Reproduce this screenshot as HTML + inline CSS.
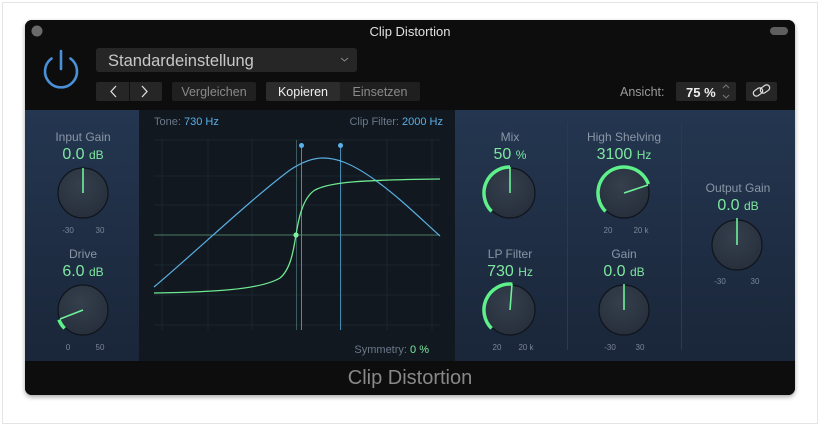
<!DOCTYPE html>
<html><head><meta charset="utf-8"><style>
html,body{margin:0;padding:0;width:820px;height:426px;overflow:hidden;background:#fff;}
svg{display:block;font-family:"Liberation Sans",sans-serif;}
</style></head><body>
<svg width="820" height="426" viewBox="0 0 820 426" xmlns="http://www.w3.org/2000/svg">
<defs>
<linearGradient id="bl" x1="0" y1="0" x2="0" y2="1"><stop offset="0" stop-color="#243650"/><stop offset="1" stop-color="#1a2639"/></linearGradient>
<radialGradient id="kn" cx="0.45" cy="0.35" r="0.7"><stop offset="0" stop-color="#353f4d"/><stop offset="1" stop-color="#262e3a"/></radialGradient>
<filter id="sh" x="-5%" y="-5%" width="110%" height="115%"><feDropShadow dx="0" dy="2" stdDeviation="2.5" flood-color="#000" flood-opacity="0.35"/></filter>
<clipPath id="win"><rect x="25" y="20" width="770" height="375" rx="7"/></clipPath>
</defs>
<rect x="2.5" y="2.5" width="815" height="421" fill="#fff" stroke="#e4e4e4"/>
<rect x="25" y="20" width="770" height="375" rx="7" fill="#0d0d0d" filter="url(#sh)"/>
<g clip-path="url(#win)">
<rect x="25" y="20" width="770" height="375" fill="#0d0d0d"/>
<rect x="25" y="110" width="114" height="251" fill="url(#bl)"/>
<rect x="139" y="110" width="316" height="251" fill="#111820"/>
<rect x="455" y="110" width="340" height="251" fill="url(#bl)"/>
<rect x="25" y="361" width="770" height="34" fill="#0d0d0d"/>
<line x1="567.5" y1="122" x2="567.5" y2="350" stroke="#2a3a50" stroke-width="1"/>
<line x1="681.5" y1="122" x2="681.5" y2="350" stroke="#2a3a50" stroke-width="1"/>
</g>
<circle cx="37" cy="31" r="5.5" fill="#6a6a6a"/>
<rect x="770" y="27" width="18" height="8" rx="4" fill="#5e5e5e"/>
<text x="410" y="36" font-size="13" fill="#e0e0e0" text-anchor="middle">Clip Distortion</text>
<path d="M51.5 58.5 A16 16 0 1 0 70.5 58.5" fill="none" stroke="#4a90d9" stroke-width="2.6" stroke-linecap="round"/>
<line x1="61" y1="51" x2="61" y2="69" stroke="#4a90d9" stroke-width="2.6" stroke-linecap="round"/>
<rect x="96" y="48" width="261" height="24" rx="3" fill="#262626"/>
<text x="108" y="66" font-size="16.5" fill="#c8c8c8">Standardeinstellung</text>
<path d="M341 58 l3.5 3 l3.5 -3" fill="none" stroke="#888" stroke-width="1"/>
<rect x="96" y="82" width="66" height="19" rx="2" fill="#262626"/>
<line x1="129.5" y1="82" x2="129.5" y2="101" stroke="#111"/>
<path d="M116 86 l-5 5.5 l5 5.5" fill="none" stroke="#ddd" stroke-width="1.3"/>
<path d="M142 86 l5 5.5 l-5 5.5" fill="none" stroke="#ddd" stroke-width="1.3"/>
<rect x="172" y="82" width="84" height="19" rx="2" fill="#202020"/>
<text x="214" y="96" font-size="12.5" fill="#8a8a8a" text-anchor="middle">Vergleichen</text>
<rect x="266" y="82" width="154" height="19" rx="2" fill="#1f1f1f"/>
<rect x="266" y="82" width="74" height="19" rx="2" fill="#2c2c2c"/>
<text x="303" y="96" font-size="12.5" fill="#f0f0f0" text-anchor="middle">Kopieren</text>
<text x="380" y="96" font-size="12.5" fill="#8a8a8a" text-anchor="middle">Einsetzen</text>
<text x="620" y="96" font-size="12.5" fill="#9a9a9a">Ansicht:</text>
<rect x="676" y="82" width="60" height="19" rx="2" fill="#262626"/>
<text x="686" y="97" font-size="13" font-weight="bold" fill="#eee">75 %</text>
<path d="M723 88 l3 -3 l3 3 M723 95 l3 3 l3 -3" fill="none" stroke="#777" stroke-width="1"/>
<rect x="746" y="82" width="31" height="19" rx="2" fill="#262626"/>
<g fill="none" stroke="#ddd" stroke-width="1.2"><rect x="753" y="89" width="10" height="6" rx="3" transform="rotate(-35 758 92)"/><rect x="760" y="86" width="10" height="6" rx="3" transform="rotate(-35 765 89)"/></g>
<g stroke="#1b2530" stroke-width="1">
<line x1="162" y1="138" x2="162" y2="330"/><line x1="208" y1="138" x2="208" y2="330"/><line x1="252" y1="138" x2="252" y2="330"/><line x1="342" y1="138" x2="342" y2="330"/><line x1="387" y1="138" x2="387" y2="330"/><line x1="432" y1="138" x2="432" y2="330"/>
<line x1="154" y1="140" x2="440" y2="140"/><line x1="154" y1="176" x2="440" y2="176"/><line x1="154" y1="205" x2="440" y2="205"/><line x1="154" y1="265" x2="440" y2="265"/><line x1="154" y1="295" x2="440" y2="295"/><line x1="154" y1="325" x2="440" y2="325"/>
</g>
<line x1="154" y1="235" x2="440" y2="235" stroke="#4a7a64" stroke-width="1"/>
<line x1="296.5" y1="140" x2="296.5" y2="330" stroke="#3c5a60" stroke-width="1"/>
<line x1="301.5" y1="146" x2="301.5" y2="330" stroke="#4a8ab0" stroke-width="1"/>
<line x1="340.5" y1="146" x2="340.5" y2="330" stroke="#4a8ab0" stroke-width="1"/>
<circle cx="301.5" cy="145.5" r="2.5" fill="#5ab0e8"/>
<circle cx="340.5" cy="145.5" r="2.5" fill="#5ab0e8"/>
<path d="M154 287 C200 248 250 200 290 170 C305 160 315 158 323 158 C335 158 350 162 375 180 C400 198 420 218 440 236" fill="none" stroke="#5aaee0" stroke-width="1.2"/>
<path d="M154 293 C210 292 260 290 280 278 C292 268 294 245 296 235 C298 222 302 198 315 190 C330 182 360 180 440 179" fill="none" stroke="#6ee890" stroke-width="1.3"/>
<circle cx="296" cy="235" r="2.6" fill="#7ef0a0"/>
<text x="154" y="125" font-size="11" fill="#6a7888">Tone: <tspan fill="#5ab0e8">730 Hz</tspan></text>
<text x="443" y="125" font-size="11" fill="#6a7888" text-anchor="end">Clip Filter: <tspan fill="#5ab0e8">2000 Hz</tspan></text>
<text x="429" y="353" font-size="11" fill="#6a7888" text-anchor="end">Symmetry: <tspan fill="#7ee8a0">0 %</tspan></text>
<g stroke="#0f141b" stroke-width="1.2" fill="url(#kn)">
<circle cx="83" cy="193" r="25"/><circle cx="83" cy="310" r="25"/>
<circle cx="510" cy="193" r="25"/><circle cx="510" cy="310" r="25"/>
<circle cx="624" cy="193" r="25"/><circle cx="624" cy="310" r="25"/>
<circle cx="737" cy="245" r="25"/>
</g>
<g fill="none" stroke="#5ef08a" stroke-width="3.5">
<path d="M491.6 211.4 A26 26 0 0 1 510 167"/>
<path d="M605.6 211.4 A26 26 0 1 1 648.4 184.1"/>
<path d="M491.6 328.4 A26 26 0 0 1 512.3 284.1"/>
<path d="M64.6 328.4 A26 26 0 0 1 58.9 319.7"/>
</g>
<g stroke="#6ef09a" stroke-width="1.6">
<line x1="83" y1="193" x2="83" y2="168"/>
<line x1="83" y1="310" x2="60" y2="319"/>
<line x1="510" y1="193" x2="510" y2="167"/>
<line x1="510" y1="310" x2="512" y2="284"/>
<line x1="624" y1="193" x2="648" y2="185"/>
<line x1="624" y1="310" x2="624" y2="284"/>
<line x1="737" y1="245" x2="737" y2="218"/>
</g>
<g font-size="12" fill="#8a96a6" text-anchor="middle">
<text x="83" y="141">Input Gain</text><text x="83" y="258">Drive</text>
<text x="510" y="141">Mix</text><text x="510" y="258">LP Filter</text>
<text x="624" y="141">High Shelving</text><text x="624" y="258">Gain</text>
<text x="738" y="192">Output Gain</text>
</g>
<g font-size="16" fill="#7ee8a0" text-anchor="middle">
<text x="83" y="159">0.0 <tspan font-size="12">dB</tspan></text>
<text x="83" y="276">6.0 <tspan font-size="12">dB</tspan></text>
<text x="510" y="159">50 <tspan font-size="12">%</tspan></text>
<text x="510" y="276">730 <tspan font-size="12">Hz</tspan></text>
<text x="624" y="159">3100 <tspan font-size="12">Hz</tspan></text>
<text x="624" y="276">0.0 <tspan font-size="12">dB</tspan></text>
<text x="738" y="210">0.0 <tspan font-size="12">dB</tspan></text>
</g>
<g font-size="8" fill="#7a8696" text-anchor="middle">
<text x="68" y="233">-30</text><text x="100" y="233">30</text>
<text x="68" y="350">0</text><text x="100" y="350">50</text>
<text x="497" y="350">20</text><text x="526" y="350">20 k</text>
<text x="608" y="233">20</text><text x="641" y="233">20 k</text>
<text x="610" y="350">-30</text><text x="640" y="350">30</text>
<text x="720" y="284">-30</text><text x="755" y="284">30</text>
</g>
<text x="410" y="384" font-size="20" fill="#888" text-anchor="middle">Clip Distortion</text>
</svg>
</body></html>
